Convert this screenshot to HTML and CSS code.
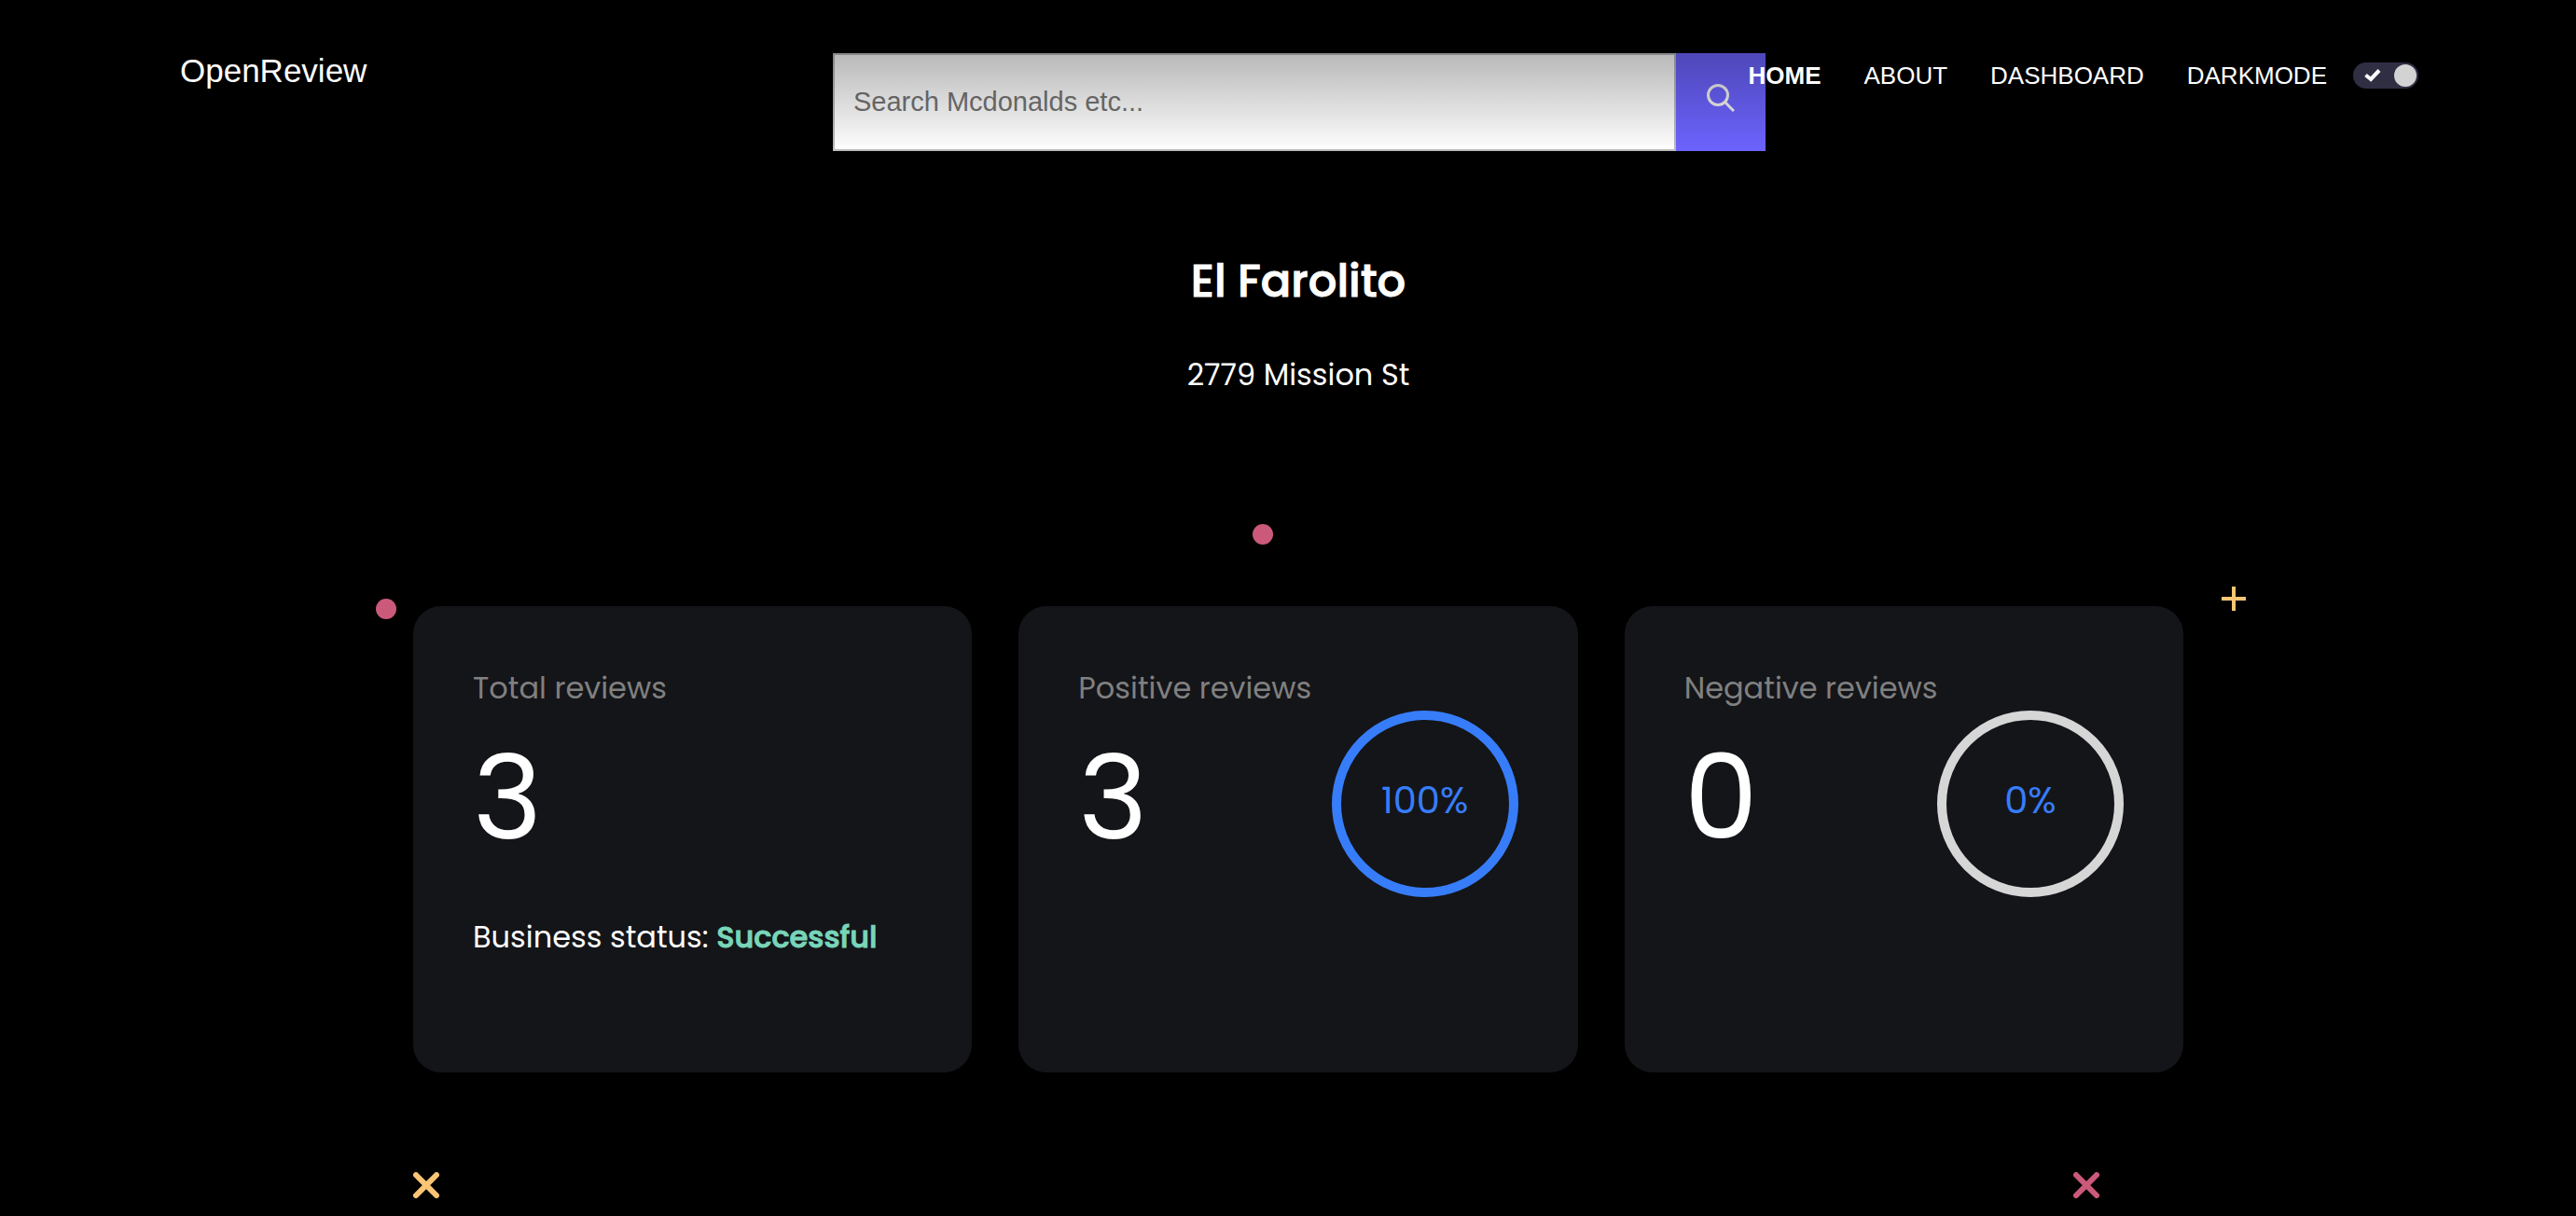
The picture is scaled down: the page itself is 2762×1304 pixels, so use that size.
FILE: index.html
```html
<!DOCTYPE html>
<html lang="en">
<head>
  <meta charset="utf-8">
  <meta name="viewport" content="width=device-width, initial-scale=1">
  <title>OpenReview - El Farolito</title>
  <link rel="stylesheet" href="styles.css">
</head>
<body>
  <header class="header">
    <a class="logo" href="#">OpenReview</a>
    <form class="search" role="search">
      <input class="search-input" type="text" placeholder="Search Mcdonalds etc..." aria-label="Search businesses">
      <button class="search-button" type="submit" aria-label="Search">
        <svg width="30" height="30" viewBox="0 0 30 30" fill="none" stroke="#f4f4f4" stroke-width="3" aria-hidden="true">
          <circle cx="12" cy="12" r="10.5"/>
          <path d="M19.5 19.5 29 29"/>
        </svg>
      </button>
    </form>
    <nav class="nav">
      <a class="nav-link nav-link-active" href="#">HOME</a>
      <a class="nav-link" href="#">ABOUT</a>
      <a class="nav-link" href="#">DASHBOARD</a>
      <label class="mode">
        <span>DARKMODE</span>
        <input class="mode-input" type="checkbox" checked>
        <span class="track">
          <svg width="18" height="14" viewBox="0 0 18 14" fill="none" stroke="#fff" stroke-width="4" aria-hidden="true">
            <path d="M1.5 6.5 7 11 16 1.5"/>
          </svg>
          <span class="knob"></span>
        </span>
      </label>
    </nav>
  </header>

  <main class="main">
    <h1 class="title">El Farolito</h1>
    <p class="address">2779 Mission St</p>

    <section class="stats">
      <article class="card">
        <h2 class="label">Total reviews</h2>
        <div class="figures">
          <span class="number">3</span>
        </div>
        <p class="status">Business status: <strong class="good">Successful</strong></p>
      </article>
      <article class="card">
        <h2 class="label">Positive reviews</h2>
        <div class="figures">
          <span class="number">3</span>
          <span class="ring ring-full">100%</span>
        </div>
      </article>
      <article class="card">
        <h2 class="label">Negative reviews</h2>
        <div class="figures">
          <span class="number">0</span>
          <span class="ring">0%</span>
        </div>
      </article>

      <span class="dot dot-left"></span>
      <span class="dot dot-top"></span>
      <svg class="mark plus" viewBox="0 0 28 28" stroke="#fac575" stroke-width="4" aria-hidden="true"><path d="M14 1v26M1 14h26"/></svg>
      <svg class="mark cross-left" viewBox="0 0 28 28" stroke="#fac575" stroke-width="6" stroke-linecap="round" aria-hidden="true"><path d="m3 3 22 22M25 3 3 25"/></svg>
      <svg class="mark cross-right" viewBox="0 0 28 28" stroke="#cb5a7a" stroke-width="6" stroke-linecap="round" aria-hidden="true"><path d="m3 3 22 22M25 3 3 25"/></svg>
    </section>
  </main>
</body>
</html>
```
FILE: styles.css
```css
* {
  box-sizing: border-box;
}

body {
  margin: 0;
  min-height: 100vh;
  background: #000;
  color: #fff;
  font-family: "Poppins", "Inter", sans-serif;
}

/* Header: the search box and the navigation share one row and may overlap */
.header {
  display: grid;
  grid-template-columns: 1fr;
  align-items: start;
  padding: 57px 169px 0 193px;
  font-family: "Liberation Sans", Arial, sans-serif;
}

.logo,
.search,
.nav {
  grid-row: 1;
  grid-column: 1;
}

.logo {
  justify-self: start;
  color: #fff;
  font-size: 35px;
  line-height: 38px;
  text-decoration: none;
}

.search {
  position: relative;
  justify-self: center;
  display: flex;
  width: 1000px;
  max-width: 100%;
  height: 105px;
}

/* Header shade falling over the search box */
.search::after {
  content: "";
  position: absolute;
  inset: 0 0 6px;
  background: linear-gradient(rgba(0, 0, 0, 0.28), rgba(0, 0, 0, 0.02));
  pointer-events: none;
}

.search-input {
  flex: 1;
  min-width: 0;
  padding: 0 20px;
  border: 2px solid #bbb;
  border-radius: 0;
  background: #fff;
  color: #222;
  font: inherit;
  font-size: 29px;
}

.search-input::placeholder {
  color: #757575;
}

.search-button {
  display: flex;
  align-items: center;
  justify-content: center;
  width: 96px;
  padding: 0 0 10px;
  border: 0;
  background: #6c63ff;
  cursor: pointer;
}

.nav {
  position: relative;
  z-index: 1;
  justify-self: end;
  display: flex;
  align-items: center;
  gap: 46px;
  height: 48px;
  font-size: 26px;
}

.nav-link {
  color: #fff;
  text-decoration: none;
}

.nav-link-active {
  font-weight: 700;
}

.mode {
  position: relative;
  display: flex;
  align-items: center;
  gap: 28px;
  cursor: pointer;
}

.mode-input {
  position: absolute;
  right: 0;
  width: 70px;
  height: 28px;
  margin: 0;
  opacity: 0;
}

.track {
  display: flex;
  align-items: center;
  justify-content: space-between;
  width: 70px;
  height: 28px;
  padding: 0 2px 0 12px;
  border-radius: 14px;
  background: #302e43;
}

.knob {
  width: 24px;
  height: 24px;
  border-radius: 50%;
  background: #d3d3d3;
}

/* Business overview */
.main {
  padding: 104px 0 0 22px;
}

.title {
  margin: 0 0 40px;
  font-size: 48px;
  font-weight: 500;
  line-height: 72px;
  text-align: center;
  -webkit-text-stroke: 1px currentColor;
}

.address {
  margin: 0;
  font-size: 32px;
  line-height: 48px;
  text-align: center;
}

.stats {
  position: relative;
  display: grid;
  grid-template-columns: repeat(3, 1fr);
  gap: 50px;
  max-width: 1898px;
  margin: 224px auto 0;
}

.card {
  min-height: 500px;
  padding: 64px;
  border-radius: 30px;
  background: #141519;
}

.label {
  margin: 0;
  color: #808080;
  font-size: 32px;
  font-weight: 400;
  line-height: 48px;
}

.figures {
  display: flex;
  align-items: flex-start;
  justify-content: space-between;
  height: 200px;
}

.number {
  font-size: 126px;
  line-height: 186px;
}

.ring {
  display: flex;
  align-items: center;
  justify-content: center;
  width: 200px;
  height: 200px;
  padding-bottom: 8px;
  border: 10px solid #d6d6d6;
  border-radius: 50%;
  color: #377dfa;
  font-size: 40px;
}

.ring-full {
  border-color: #377dfa;
}

.status {
  margin: 19px 0 0;
  font-size: 32px;
  line-height: 48px;
  white-space: nowrap;
}

.good {
  color: #78d5b9;
  font-weight: 500;
  -webkit-text-stroke: 1px currentColor;
}

/* Decorations scattered round the cards */
.dot,
.mark {
  position: absolute;
}

.dot {
  width: 22px;
  height: 22px;
  border-radius: 50%;
  background: #cb5a7a;
}

.dot-left {
  top: -8px;
  left: -40px;
}

.dot-top {
  top: -88px;
  left: 900px;
}

.mark {
  width: 28px;
  height: 28px;
}

.plus {
  top: -22px;
  right: -68px;
}

.cross-left {
  top: 607px;
  left: 0;
}

.cross-right {
  top: 607px;
  right: 90px;
}
```
